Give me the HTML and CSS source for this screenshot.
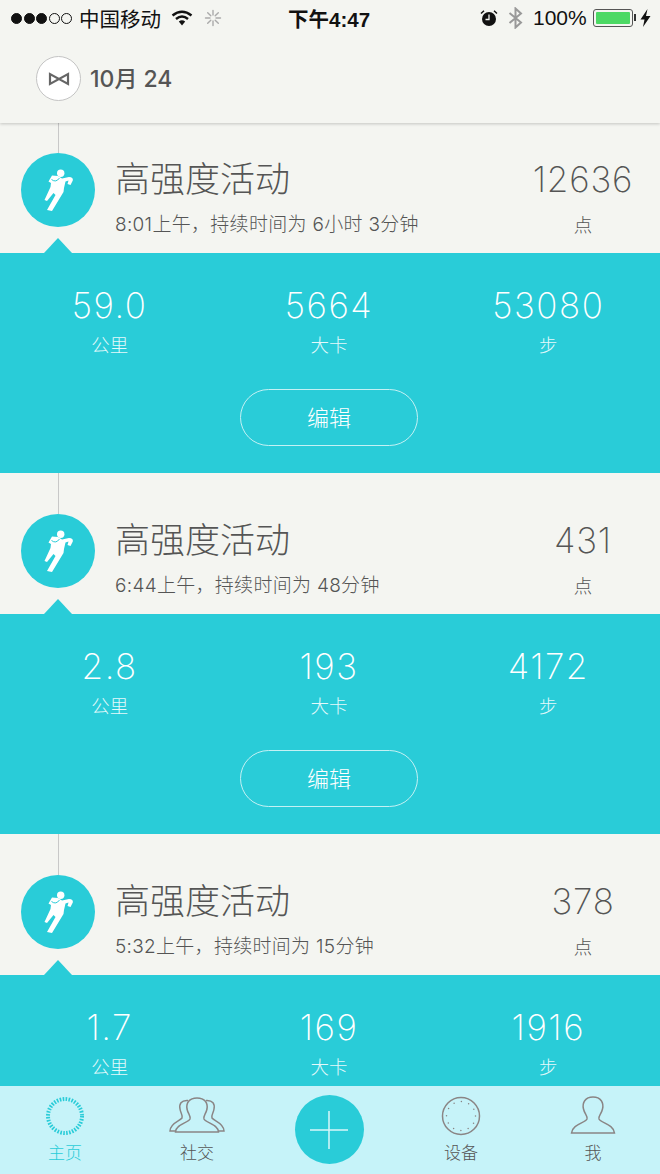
FILE: index.html
```html
<!DOCTYPE html>
<html lang="zh-CN">
<head>
  <meta charset="UTF-8">
  <meta name="viewport" content="width=device-width, initial-scale=1.0">
  <title>主页</title>
  <link rel="stylesheet" href="styles.css">
</head>
<body>
  <svg class="sprite" width="0" height="0">
    <symbol id="runner" viewBox="0 0 40 50">
      <circle cx="22.7" cy="8.3" r="3.7" fill="#fff"/>
      <path fill="#fff" d="M14 10.500 L20 11 L24 13.500 L31 12 Q35.500 12 34.800 15.500 L32.500 20 L29.500 19 L30.500 15.500 L27.500 16.500 L26 23 L25.500 27 L14 46 L9 45 L17.500 30 L15.500 28 L9 36 L6.500 35 L12.500 22 L13 18 L10.500 16.500 Z"/>
      <path fill="none" stroke="#29ccd8" stroke-width="1" d="M13.500 14.500 Q18 18 21.500 13"/>
    </symbol>
  </svg>

  <div class="phone">
    <header class="top">
      <div class="status">
        <span class="signal"><i></i><i></i><i></i><i class="off"></i><i class="off"></i></span>
        <span class="carrier">中国移动</span>
        <svg class="wifi" width="22" height="16" viewBox="0 0 22 16">
          <path fill="none" stroke="#111" stroke-width="2.4" d="M1.500 5.500 Q11 -2 20.500 5.500 M5 9 Q11 4 17 9"/>
          <path fill="#111" d="M7.800 11.500 Q11 9 14.200 11.500 L11 15.500 Z"/>
        </svg>
        <svg class="spin" width="18" height="18" viewBox="0 0 18 18" stroke="#aaa" stroke-width="1.4" stroke-linecap="round">
          <path d="M9 1.500V6M9 12V16.500M1.500 9H6M12 9H16.500M3.700 3.700L6.800 6.800M11.200 11.200L14.300 14.300M14.300 3.700L11.200 6.800M6.800 11.200L3.700 14.300"/>
        </svg>
        <span class="clock">下午4:47</span>
        <svg class="alarm" width="18" height="18" viewBox="0 0 18 18">
          <circle cx="9" cy="10" r="7" fill="#111"/>
          <path d="M9 5.500V10.500H5.500" fill="none" stroke="#f4f5f1" stroke-width="1.300"/>
          <path d="M1 4.500L4 1.800M17 4.500L14 1.800" stroke="#111" stroke-width="1.500"/>
        </svg>
        <svg class="bt" width="15" height="22" viewBox="0 0 15 22">
          <path fill="none" stroke="#999" stroke-width="2" d="M1.500 6L13 15.500L7.500 20.500V1.500L13 6.500L1.500 16"/>
        </svg>
        <span class="batt-pct">100%</span>
        <span class="battery"><b></b></span>
        <svg class="bolt" width="11" height="18" viewBox="0 0 11 18">
          <path fill="#111" d="M7.500 0L0.500 10.500H4.500L3 18L10.500 7H6Z"/>
        </svg>
      </div>
      <div class="date-row">
        <span class="logo">
          <svg width="22" height="14" viewBox="0 0 22 14">
            <path fill="none" stroke="#666" stroke-width="2.200" d="M2 2V12L20 2V12Z"/>
          </svg>
        </span>
        <span class="date">10月 24</span>
      </div>
    </header>

    <main class="feed">
      <section class="activity">
        <div class="summary">
          <div class="badge"><svg width="40" height="50"><use href="#runner"/></svg></div>
          <div class="info">
            <h2>高强度活动</h2>
            <p>8:01上午，持续时间为 6小时 3分钟</p>
          </div>
          <div class="points"><strong>12636</strong><span>点</span></div>
        </div>
        <div class="panel">
          <div class="stats">
            <div class="stat"><strong>59.0</strong><span>公里</span></div>
            <div class="stat"><strong>5664</strong><span>大卡</span></div>
            <div class="stat"><strong>53080</strong><span>步</span></div>
          </div>
          <button class="edit" type="button">编辑</button>
        </div>
      </section>

      <section class="activity">
        <div class="summary">
          <div class="badge"><svg width="40" height="50"><use href="#runner"/></svg></div>
          <div class="info">
            <h2>高强度活动</h2>
            <p>6:44上午，持续时间为 48分钟</p>
          </div>
          <div class="points"><strong>431</strong><span>点</span></div>
        </div>
        <div class="panel">
          <div class="stats">
            <div class="stat"><strong>2.8</strong><span>公里</span></div>
            <div class="stat"><strong>193</strong><span>大卡</span></div>
            <div class="stat"><strong>4172</strong><span>步</span></div>
          </div>
          <button class="edit" type="button">编辑</button>
        </div>
      </section>

      <section class="activity">
        <div class="summary">
          <div class="badge"><svg width="40" height="50"><use href="#runner"/></svg></div>
          <div class="info">
            <h2>高强度活动</h2>
            <p>5:32上午，持续时间为 15分钟</p>
          </div>
          <div class="points"><strong>378</strong><span>点</span></div>
        </div>
        <div class="panel">
          <div class="stats">
            <div class="stat"><strong>1.7</strong><span>公里</span></div>
            <div class="stat"><strong>169</strong><span>大卡</span></div>
            <div class="stat"><strong>1916</strong><span>步</span></div>
          </div>
          <button class="edit" type="button">编辑</button>
        </div>
      </section>
    </main>

    <nav class="tabs">
      <a class="tab active">
        <svg width="42" height="42" viewBox="0 0 42 42">
          <circle cx="21" cy="21" r="17" fill="none" stroke="#29ccd8" stroke-width="4" stroke-dasharray="1.600 1.370"/>
        </svg>
        <span>主页</span>
      </a>
      <a class="tab">
        <svg width="58" height="42" viewBox="0 0 58 42" fill="none" stroke="#8a8585" stroke-width="1.500">
          <path d="M20 5.500 C13 5 11 9 12 14 C12.500 18 15 20 14 23 C12 26 2 28 2 36 H12"/>
          <path d="M38 5.500 C45 5 47 9 46 14 C45.500 18 43 20 44 23 C46 26 56 28 56 36 H46"/>
          <path d="M29 3 C21 3 18 8 19 14 C20 19 23 21 22 24 C20 28 8 29 7.500 37 H50.500 C50 29 38 28 36 24 C35 21 38 19 39 14 C40 8 37 3 29 3 Z" fill="#c6f3f9"/>
        </svg>
        <span>社交</span>
      </a>
      <a class="add">
        <svg width="40" height="40" viewBox="0 0 40 40">
          <path d="M20 1V39M1 20H39" stroke="#d8f6f9" stroke-width="1.500"/>
        </svg>
      </a>
      <a class="tab">
        <svg width="42" height="42" viewBox="0 0 42 42">
          <circle cx="21" cy="21" r="18.500" fill="none" stroke="#8a8585" stroke-width="1.500"/>
          <circle cx="21" cy="21" r="14.500" fill="none" stroke="#8a8585" stroke-width="1.500" stroke-linecap="round" stroke-dasharray="0 7.590"/>
        </svg>
        <span>设备</span>
      </a>
      <a class="tab">
        <svg width="46" height="42" viewBox="0 0 46 42" fill="none" stroke="#8a8585" stroke-width="1.500">
          <path d="M23 2 C15 2 12 8 13.500 14 C14.500 19 18 21 17 24 C15 28 2.500 29 1.500 38 H44.500 C43.500 29 31 28 29 24 C28 21 31.500 19 32.500 14 C34 8 31 2 23 2 Z"/>
        </svg>
        <span>我</span>
      </a>
    </nav>
  </div>
</body>
</html>
```

FILE: styles.css
```css
/* General */
body {
    margin: 0;
    background: #f4f5f1;
    font-family: "Inter", "Noto Sans CJK SC", sans-serif;
    color: #555;
}

.sprite {
    display: block;
}

.phone {
    position: relative;
    width: 660px;
    height: 1174px;
    overflow: hidden;
    background: #f4f5f1;
}

/* Status bar and date */
.top {
    position: relative;
    z-index: 2;
    height: 123px;
    background: #f4f5f1;
    box-shadow: 0 1px 3px rgba(0, 0, 0, 0.2);
}

.status {
    display: flex;
    align-items: center;
    height: 36px;
    padding-bottom: 2px;
    padding-left: 11px;
    color: #111;
    font-family: "Liberation Sans", "Noto Sans CJK SC", sans-serif;
    font-size: 20.500px;
}

.signal {
    display: flex;
    gap: 1.500px;
    width: 68px;
}

.signal i {
    width: 11px;
    height: 11px;
    border: 1px solid #111;
    border-radius: 50%;
    box-sizing: border-box;
    background: #111;
}

.signal i.off {
    background: none;
}

.carrier {
    width: 92px;
    white-space: nowrap;
}

.spin {
    margin-left: 11px;
}

.clock {
    width: 83px;
    margin-left: 66px;
    font-weight: bold;
    white-space: nowrap;
}

.alarm {
    margin-left: 109px;
}

.bt {
    margin-left: 10px;
}

.batt-pct {
    margin-left: 10px;
    font-size: 21px;
}

.battery {
    position: relative;
    box-sizing: border-box;
    width: 40px;
    height: 18px;
    margin-left: 6px;
    padding: 2px;
    border: 1px solid #555;
    border-radius: 3px;
}

.battery b {
    display: block;
    height: 100%;
    border-radius: 1px;
    background: #4cd964;
}

.battery::after {
    content: "";
    position: absolute;
    top: 4px;
    right: -4px;
    width: 2px;
    height: 7px;
    background: #333;
}

.bolt {
    margin-left: 7px;
}

.date-row {
    display: flex;
    align-items: center;
    gap: 9px;
    padding: 18px 0 0 36px;
}

.logo {
    display: flex;
    align-items: center;
    justify-content: center;
    box-sizing: border-box;
    width: 45px;
    height: 45px;
    border: 1.5px solid #c4c4c4;
    border-radius: 50%;
    background: #fff;
}

.date {
    padding-bottom: 3px;
    font-size: 23px;
    font-weight: 500;
    color: #555;
}

/* Activity rows */
.feed {
    margin-top: -11px;
}

.summary {
    position: relative;
    display: flex;
    align-items: flex-start;
    height: 141px;
    box-sizing: border-box;
    padding: 41px 0 0 21px;
}

/* timeline going up from the badge */
.summary::before {
    content: "";
    position: absolute;
    top: 0;
    left: 58px;
    width: 1px;
    height: 41px;
    background: #c8c8c8;
}

.badge {
    display: flex;
    align-items: center;
    justify-content: center;
    flex: none;
    width: 74px;
    height: 74px;
    border-radius: 50%;
    background: #29ccd8;
}

.info {
    flex: 1;
    padding-left: 20px;
}

.info h2 {
    margin: 3px 0 0;
    font-size: 35px;
    font-weight: 300;
    line-height: 46px;
    color: #555;
    white-space: nowrap;
}

.info p {
    margin: 10px 0 0;
    font-size: 19px;
    font-weight: 300;
    line-height: 26px;
    letter-spacing: 0.3px;
    color: #555;
    white-space: nowrap;
}

.points {
    display: flex;
    flex-direction: column;
    align-items: center;
    flex: none;
    width: 154px;
}

.points strong {
    margin-top: 3px;
    font-size: 35px;
    font-weight: 200;
    line-height: 46px;
    letter-spacing: 0.8px;
}

.points span {
    margin-top: 10px;
    font-size: 18.500px;
    font-weight: 300;
    line-height: 26px;
}

/* Blue panel */
.panel {
    position: relative;
    box-sizing: border-box;
    height: 220px;
    padding-right: 2px;
    background: #29ccd8;
    color: #fff;
}

.panel::before {
    content: "";
    position: absolute;
    top: -15px;
    left: 44px;
    border-right: 14px solid transparent;
    border-bottom: 15px solid #29ccd8;
    border-left: 14px solid transparent;
}

.stats {
    display: grid;
    grid-template-columns: repeat(3, 1fr);
    padding-top: 29px;
}

.stat {
    display: flex;
    flex-direction: column;
    align-items: center;
}

.stat strong {
    font-size: 35px;
    font-weight: 200;
    line-height: 46px;
    letter-spacing: 1.500px;
}

.stat span {
    margin-top: 4px;
    font-size: 18.500px;
    font-weight: 300;
    line-height: 26px;
    color: #e4f9fb;
}

.edit {
    display: block;
    width: 178px;
    height: 57px;
    margin: 31px auto 0;
    padding: 0 0 3px;
    border: 1.5px solid #c4f1f4;
    border-radius: 29px;
    background: none;
    color: #fff;
    font-family: inherit;
    font-size: 22px;
    font-weight: 300;
}

/* Bottom tabs */
.tabs {
    position: absolute;
    left: 0;
    right: 0;
    bottom: 0;
    display: grid;
    grid-template-columns: 130px 134px 130px 134px 130px;
    height: 88px;
    background: #c6f3f9;
}

.tab {
    display: flex;
    flex-direction: column;
    align-items: center;
    padding-top: 9px;
    font-size: 17px;
    font-weight: 300;
    line-height: 24px;
    color: #555;
}

.tab svg {
    display: block;
    height: 42px;
}

.tab span {
    margin-top: 4px;
}

.tab.active {
    color: #29ccd8;
}

.add {
    display: flex;
    align-items: center;
    justify-content: center;
    width: 69px;
    height: 69px;
    margin: 9px auto 0;
    border-radius: 50%;
    background: #29ccd8;
}
```
